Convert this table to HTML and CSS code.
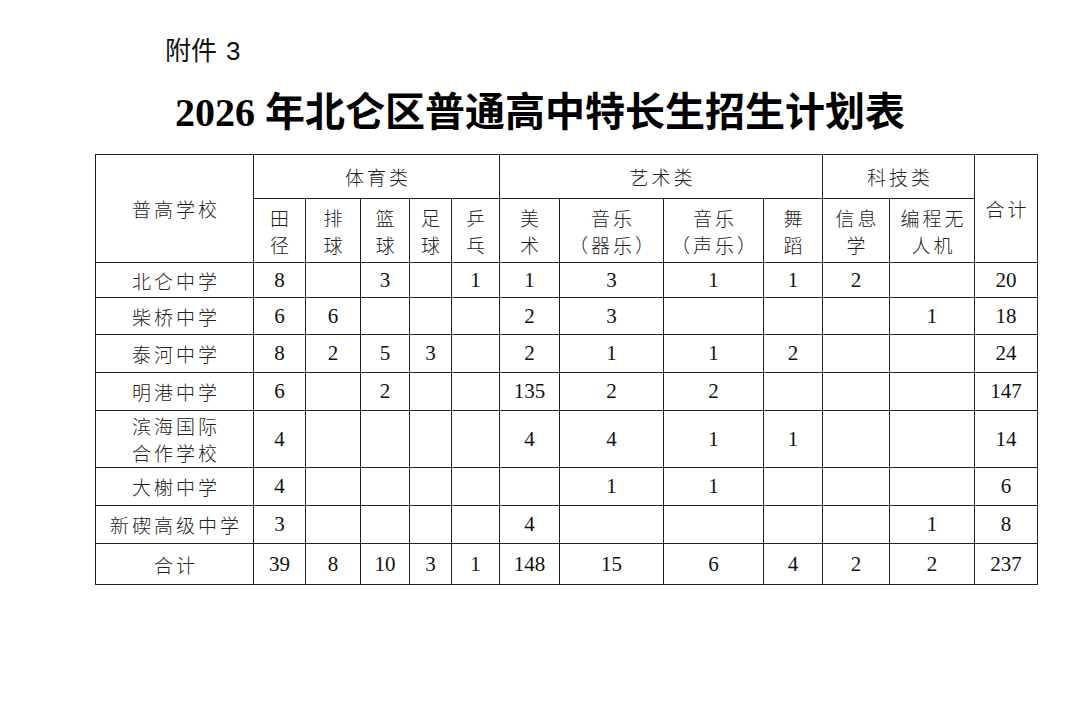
FILE: index.html
```html
<!DOCTYPE html>
<html lang="zh-CN">
<head>
<meta charset="utf-8">
<title>2026年北仑区普通高中特长生招生计划表</title>
<link rel="stylesheet" href="styles.css">
</head>
<body>
<div class="page">
  <div class="attach">附件<span class="attach-num">3</span></div>
  <h1 class="title"><span class="num">2026</span> 年北仑区普通高中特长生招生计划表</h1>
  <table class="plan">
    <colgroup>
      <col class="w158"><col class="w52"><col class="w55"><col class="w49"><col class="w42"><col class="w48">
      <col class="w60"><col class="w104"><col class="w100"><col class="w59">
      <col class="w67"><col class="w85"><col class="w63">
    </colgroup>
    <tr class="h44">
      <td class="c" rowspan="2">普高学校</td>
      <td class="c" colspan="5">体育类</td>
      <td class="c" colspan="4">艺术类</td>
      <td class="c" colspan="2">科技类</td>
      <td class="c" rowspan="2">合计</td>
    </tr>
    <tr class="h64">
      <td class="c">田<br>径</td>
      <td class="c">排<br>球</td>
      <td class="c">篮<br>球</td>
      <td class="c">足<br>球</td>
      <td class="c">乒<br>乓</td>
      <td class="c">美<br>术</td>
      <td class="c">音乐<br>（器乐）</td>
      <td class="c">音乐<br>（声乐）</td>
      <td class="c">舞<br>蹈</td>
      <td class="c">信息<br>学</td>
      <td class="c">编程无<br>人机</td>
    </tr>
    <tr class="h35">
      <td class="c">北仑中学</td><td>8</td><td></td><td>3</td><td></td><td>1</td><td>1</td><td>3</td><td>1</td><td>1</td><td>2</td><td></td><td>20</td>
    </tr>
    <tr class="h37">
      <td class="c">柴桥中学</td><td>6</td><td>6</td><td></td><td></td><td></td><td>2</td><td>3</td><td></td><td></td><td></td><td>1</td><td>18</td>
    </tr>
    <tr class="h38">
      <td class="c">泰河中学</td><td>8</td><td>2</td><td>5</td><td>3</td><td></td><td>2</td><td>1</td><td>1</td><td>2</td><td></td><td></td><td>24</td>
    </tr>
    <tr class="h38">
      <td class="c">明港中学</td><td>6</td><td></td><td>2</td><td></td><td></td><td>135</td><td>2</td><td>2</td><td></td><td></td><td></td><td>147</td>
    </tr>
    <tr class="h57">
      <td class="c">滨海国际<br>合作学校</td><td>4</td><td></td><td></td><td></td><td></td><td>4</td><td>4</td><td>1</td><td>1</td><td></td><td></td><td>14</td>
    </tr>
    <tr class="h38">
      <td class="c">大榭中学</td><td>4</td><td></td><td></td><td></td><td></td><td></td><td>1</td><td>1</td><td></td><td></td><td></td><td>6</td>
    </tr>
    <tr class="h38">
      <td class="c">新碶高级中学</td><td>3</td><td></td><td></td><td></td><td></td><td>4</td><td></td><td></td><td></td><td></td><td>1</td><td>8</td>
    </tr>
    <tr class="h41">
      <td class="c">合计</td><td>39</td><td>8</td><td>10</td><td>3</td><td>1</td><td>148</td><td>15</td><td>6</td><td>4</td><td>2</td><td>2</td><td>237</td>
    </tr>
  </table>
</div>
</body>
</html>
```
FILE: styles.css
```css
html, body {
  margin: 0;
  padding: 0;
  background: #fff;
}
.page {
  width: 1080px;
  height: 708px;
  overflow: hidden;
}
.attach {
  margin: 34px 0 0 165px;
  height: 30px;
  font-family: "Noto Sans CJK SC", "Noto Sans", sans-serif;
  font-size: 26px;
  line-height: 30px;
  color: #111;
}
.attach-num {
  margin-left: 9px;
  font-family: "Liberation Sans", sans-serif;
}
.title {
  margin: 25px 0 0 0;
  text-align: center;
  font-family: "Liberation Serif", "Noto Sans CJK SC", serif;
  font-weight: 700;
  font-size: 40px;
  line-height: 48px;
  height: 48px;
  color: #000;
}
.title .num {
  font-family: "Liberation Serif", serif;
}
.plan {
  margin: 17px 0 0 95px;
  border-collapse: collapse;
  table-layout: fixed;
  width: 942px;
  font-family: "Liberation Serif", serif;
  font-size: 21px;
  color: #111;
}
.plan td {
  border: 1px solid #222;
  padding: 0;
  text-align: center;
  vertical-align: middle;
  line-height: 27px;
}
.plan td.c {
  font-family: "Noto Sans CJK SC", sans-serif;
  font-weight: 300;
  font-size: 19px;
  letter-spacing: 3px;
  padding-left: 3px;
  color: #222;
}
.w158 { width: 158px; }
.w52 { width: 52px; }
.w55 { width: 55px; }
.w49 { width: 49px; }
.w42 { width: 42px; }
.w48 { width: 48px; }
.w60 { width: 60px; }
.w104 { width: 104px; }
.w100 { width: 100px; }
.w59 { width: 59px; }
.w67 { width: 67px; }
.w85 { width: 85px; }
.w63 { width: 63px; }
.h44 { height: 44px; }
.h64 { height: 64px; }
.h35 { height: 35px; }
.h37 { height: 37px; }
.h38 { height: 38px; }
.h57 { height: 57px; }
.h41 { height: 41px; }
```
